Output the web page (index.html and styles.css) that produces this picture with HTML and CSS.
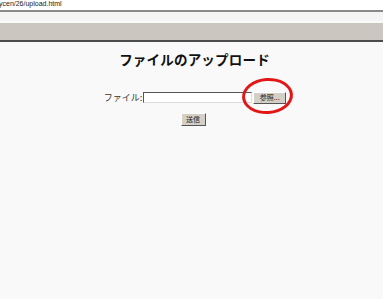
FILE: index.html
```html
<!DOCTYPE html>
<html lang="ja">
<head>
    <meta charset="UTF-8">
    <title>ファイルのアップロード</title>
    <link rel="stylesheet" href="styles.css">
</head>
<body>
    <div class="chrome">
        <div class="address">ycen/26/upload.html</div>
        <div class="address-rule"></div>
        <div class="tab-strip"></div>
        <div class="toolbar"></div>
    </div>

    <div class="page">
        <h1>ファイルのアップロード</h1>
        <form class="upload-form">
            <div class="file-row">
                <label>ファイル:</label>
                <span class="file-box"></span>
                <span class="browse-wrap">
                    <button type="button" class="btn browse">参照...</button>
                    <span class="circle"></span>
                </span>
            </div>
            <div class="submit-row">
                <button type="submit" class="btn send">送信</button>
            </div>
        </form>
    </div>
</body>
</html>
```

FILE: styles.css
```css
body {
    margin: 0;
    padding: 0;
    background: #f9f9f9;
    font-family: "Noto Sans CJK JP", "DejaVu Sans", sans-serif;
    overflow: hidden;
}

.chrome {
    background: #fff;
}

.address {
    height: 10px;
    font-family: "Liberation Sans", sans-serif;
    font-size: 7px;
    line-height: 7px;
    color: #222;
    margin-left: -1px;
}

.address-rule {
    height: 2px;
    background: #8a8a8a;
}

.tab-strip {
    height: 9px;
    background: #f4f4f4;
    border-bottom: 2px solid #fbfbfb;
}

.toolbar {
    height: 17px;
    background: #cbc7c0;
    border-bottom: 2px solid #4c4c4c;
}

.page {
    text-align: center;
}

h1 {
    margin: 8px 0 0;
    font-size: 13.5px;
    line-height: 18px;
    font-weight: bold;
    color: #111;
    letter-spacing: 0.2px;
    padding-left: 6px;
}

.upload-form {
    margin-top: 23px;
}

.file-row {
    display: flex;
    justify-content: center;
    align-items: center;
    height: 13px;
    padding-left: 7px;
}

.file-row label {
    font-size: 9px;
    color: #333;
    margin-right: 1px;
}

.file-box {
    width: 107px;
    height: 9px;
    background: #fff;
    border-top: 1px solid #555;
    border-left: 1px solid #555;
    border-right: 1px solid #ddd;
    border-bottom: 1px solid #ddd;
}

.browse-wrap {
    position: relative;
    display: flex;
    margin-left: 1px;
}

.btn {
    font-family: "Noto Sans CJK JP", sans-serif;
    font-size: 7px;
    line-height: 9px;
    color: #222;
    background: #d4d0c8;
    border: 1px solid;
    border-color: #fff #555 #555 #fff;
    border-radius: 0;
    cursor: pointer;
}

.browse {
    width: 33px;
    height: 12px;
    padding: 0;
}

.circle {
    position: absolute;
    left: -11px;
    top: -14px;
    width: 45px;
    height: 30px;
    border: 3px solid #e21818;
    border-radius: 50%;
    transform: rotate(-4deg);
}

.submit-row {
    display: flex;
    justify-content: center;
    margin-top: 9px;
    padding-left: 3px;
}

.send {
    width: 25px;
    height: 13px;
    padding: 0;
}
```
